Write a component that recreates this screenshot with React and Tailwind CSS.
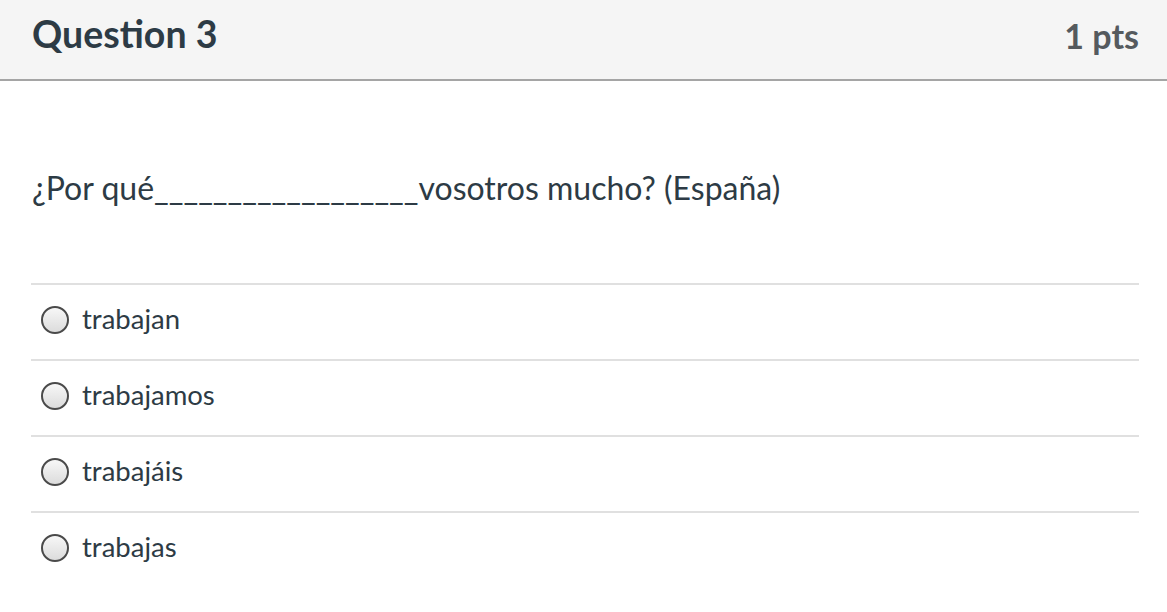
const options = ['trabajan', 'trabajamos', 'trabajáis', 'trabajas'];

export default function App() {
  return (
    <div className="w-[1167px] h-[612px] bg-white overflow-hidden font-['Lato','Liberation_Sans',sans-serif] text-[#2d3b45]">
      <div className="h-[81px] bg-[#f5f5f5] border-b-2 border-[#a5a5a5] flex items-center justify-between pl-[32px] pr-[28px]">
        <h2 className="text-[37.5px] font-bold leading-none -mt-[11px] text-[#2d3b45]">Question 3</h2>
        <div className="text-[34px] font-bold leading-none -mt-[8px] text-[#555a5e]">1 pts</div>
      </div>

      <div className="px-[31px] pr-[28px]">
        <p className="text-[32px] leading-none pt-[91px] pb-[79px] pl-[1px]">
          ¿Por qué__________________vosotros mucho? (España)
        </p>

        <div>
          {options.map((o) => (
            <label key={o} className="flex items-center h-[76px] border-t-2 border-[#e0e0e0] pl-[10px]">
              <span className="w-[28px] h-[28px] -mt-[4px] rounded-full border-[2.5px] border-[#4a4a4a] bg-gradient-to-b from-[#f7f7f7] to-[#dcdcdc] shrink-0" />
              <span className="ml-[13px] text-[27.5px] leading-none -mt-[6px]">{o}</span>
            </label>
          ))}
        </div>
      </div>
    </div>
  );
}
